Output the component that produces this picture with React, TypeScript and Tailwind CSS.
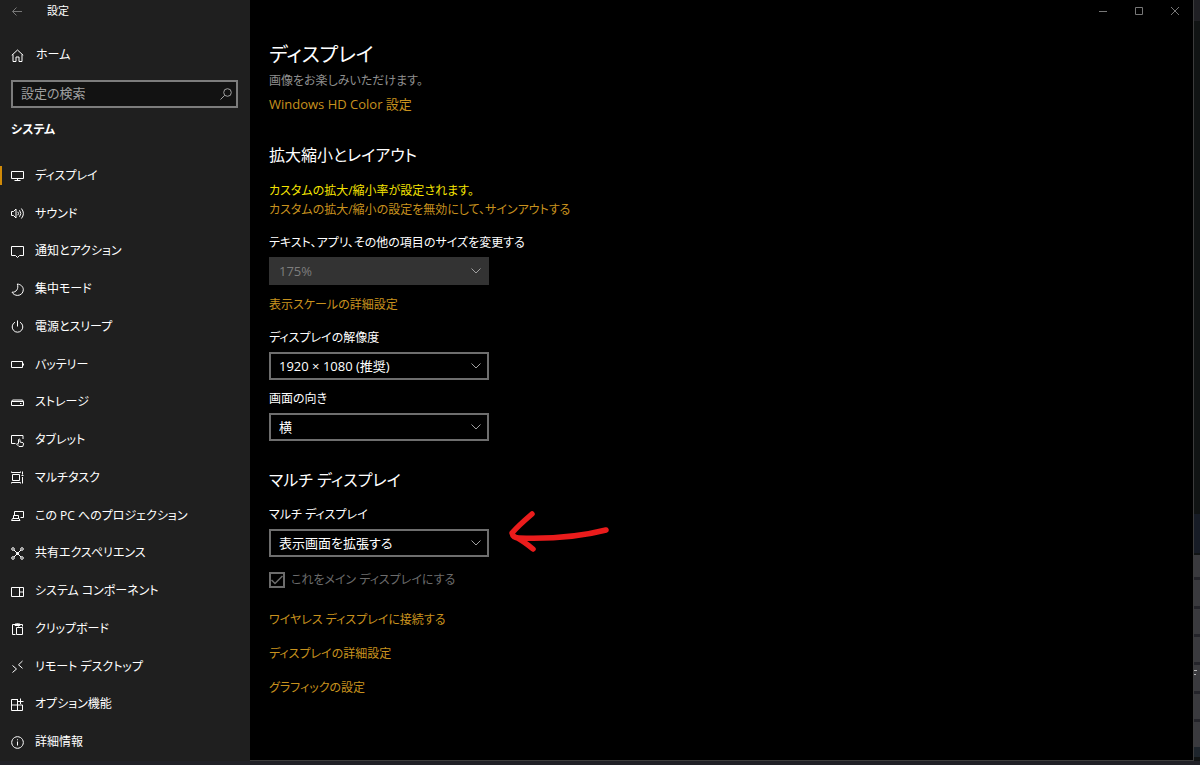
import { ReactNode } from "react";

const ICONS: Record<string, ReactNode> = {
  display: <path d="M.5 2.500h12v7H.5zM3.500 11.500h6M6.500 9.500v2" />,
  sound: <path d="M.5 4.500h2l2.500-2.500v9l-2.500-2.500h-2zM6.800 4.800q1.500 1.700 0 3.400M8.500 3.200q2.700 3.300 0 6.600M10.400 1.500q4 5 0 10" />,
  notify: <path d="M.5 1.500h12v9H8.500l-2 2-2-2H.5z" />,
  focus: <path d="M6.300 1c3.600.4 6 2.700 6 5.700 0 3.200-2.500 5.700-5.600 5.700-2.500 0-4.600-1.200-5.700-3.200 4.300.4 7-3.800 5.300-8.200z" />,
  power: <path d="M6.500.5v6M4 2.200a5.300 5.300 0 1 0 5 0" />,
  battery: <path d="M.5 3.500h11v6H.5zM12.500 5.500v2" />,
  storage: <path d="M.5 5.500l1-1.500h10l1 1.500v4H.5zM.5 5.500h12M9 7.500h1.500" />,
  tablet: <path d="M4.500 9.500h-4v-8h11.500v3.500M7.500 9.500V5.500q.8-1 1.500 0V8l3 .7q.7.300.5 1.300l-.7 2.500H8L5.500 10q.8-1 2 0" />,
  multitask: <path d="M1.500 3.500h7v6h-7zM.5.500v1h9v-1M.5 12.500v-1h9v1M11.500.5v3M11.500 6v6.500M10.500 4.500h2" />,
  project: <path d="M3.500 6V2.500h9v6H9.500M2.500 6.500h5v3h-5zM.5 11.500h8.500l-1-2H1.500z" />,
  shared: (
    <>
      <path d="M3 3l7 7M10 3l-7 7" />
      <circle cx="2" cy="2" r="1.300" />
      <circle cx="11" cy="2" r="1.300" />
      <circle cx="2" cy="11" r="1.300" />
      <circle cx="11" cy="11" r="1.300" />
      <circle cx="6.500" cy="6.500" r="1" fill="currentColor" />
    </>
  ),
  components: <path d="M.5 2.500h12v9H.5zM8.500 2.500v9M8.500 7h4" />,
  clipboard: <path d="M4.500 12.500h-3v-10h10v2M4 3.500V2h1.500q1-2 2 0H9v1.500zM5.500 5.500h6v7h-6zM7.500 5.500v-1" />,
  remote: <path d="M1.500 5.500l4 3.500-4 3.500M11.500 1L7.500 4.800l4 3.500" />,
  optional: <path d="M7 1.500H.5v11h11V7M.5 7h11M6.500 1.500v11M9.500.5v5.500M7 3.500h5.500" />,
  about: <path d="M6.500.7a5.800 5.800 0 1 0 .01 0zM6.500 5.500v4M6.500 3.300v1" />,
  home: <path d="M.8 6.300L6.500 1l5.700 5.300M2 5.500v7h3V8h3v4.500h3v-7" />,
};

const NAV = [
  { icon: "display", label: "ディスプレイ" },
  { icon: "sound", label: "サウンド" },
  { icon: "notify", label: "通知とアクション" },
  { icon: "focus", label: "集中モード" },
  { icon: "power", label: "電源とスリープ" },
  { icon: "battery", label: "バッテリー" },
  { icon: "storage", label: "ストレージ" },
  { icon: "tablet", label: "タブレット" },
  { icon: "multitask", label: "マルチタスク" },
  { icon: "project", label: "この PC へのプロジェクション" },
  { icon: "shared", label: "共有エクスペリエンス" },
  { icon: "components", label: "システム コンポーネント" },
  { icon: "clipboard", label: "クリップボード" },
  { icon: "remote", label: "リモート デスクトップ" },
  { icon: "optional", label: "オプション機能" },
  { icon: "about", label: "詳細情報" },
];

function Icon({ name }: { name: string }) {
  return (
    <svg viewBox="0 0 13 13" className="size-[13px] shrink-0 overflow-visible" fill="none" stroke="currentColor" aria-hidden="true">
      {ICONS[name]}
    </svg>
  );
}

interface SelectFieldProps {
  id: string;
  label: string;
  value: string;
  disabled?: boolean;
}

function SelectField({ id, label, value, disabled }: SelectFieldProps) {
  return (
    <div className="flex flex-col">
      <label htmlFor={id} className="mb-1 leading-5">{label}</label>
      <div className="relative w-[220px]">
        <select
          id={id}
          disabled={disabled}
          className="block h-7 w-full appearance-none border-2 border-[#6e6e6e] bg-black pl-2 pr-8 text-[13px] leading-5 text-white opacity-100 disabled:border-[#333] disabled:bg-[#333] disabled:text-[#7d7d7d]"
        >
          <option>{value}</option>
        </select>
        <svg viewBox="0 0 10 6" className="pointer-events-none absolute right-2 top-[11px] h-[6px] w-[10px] text-[#a0a0a0]" fill="none" stroke="currentColor" aria-hidden="true">
          <path d="M.5.5L5 5 9.500.5" />
        </svg>
      </div>
    </div>
  );
}

function Link({ children }: { children: ReactNode }) {
  return (
    <a href="#" className="self-start leading-5 text-[#c8921e]">{children}</a>
  );
}

function Sidebar() {
  return (
    <aside className="flex w-[250px] shrink-0 flex-col bg-[#1f1f1f]">
      <div className="flex h-[23px] items-center gap-[25px] pl-[12px] text-[11px]">
        <button aria-label="戻る" className="text-[#777]">
          <svg viewBox="0 0 10 9" className="h-[9px] w-[10px]" fill="none" stroke="currentColor" aria-hidden="true">
            <path d="M10 4.500H.7M4.500.5l-4 4 4 4" />
          </svg>
        </button>
        <span>設定</span>
      </div>
      <a href="#" className="mt-5 flex h-6 items-center gap-3 pl-[11px]">
        <Icon name="home" />
        ホーム
      </a>
      <div className="ml-[11px] mr-3 mt-[13px] flex h-7 items-center border-2 border-[#7c7c7c] bg-[#121212] pr-1 text-[13px]">
        <input
          type="text"
          aria-label="設定の検索"
          placeholder="設定の検索"
          className="min-w-0 flex-1 bg-transparent pl-2 outline-none placeholder:text-[#a0a0a0]"
        />
        <svg viewBox="0 0 12 12" className="size-3 text-[#a0a0a0]" fill="none" stroke="currentColor" aria-hidden="true">
          <circle cx="7.500" cy="4.500" r="3.800" />
          <path d="M4.700 7.300L.5 11.500" />
        </svg>
      </div>
      <h2 className="ml-[11px] mt-3 font-bold leading-5">システム</h2>
      <nav className="mt-[17px] flex flex-1 flex-col">
        {NAV.map((item, i) => (
          <a key={item.icon} href="#" className="flex flex-1 items-center" aria-current={i === 0 ? "page" : undefined}>
            <span className={i === 0 ? "h-[19px] w-[2px] bg-[#d08a08]" : "w-[2px]"} />
            <span className="flex items-center gap-[11px] pl-[9px]">
              <Icon name={item.icon} />
              <span className="leading-5">{item.label}</span>
            </span>
          </a>
        ))}
      </nav>
    </aside>
  );
}

function WindowControls() {
  return (
    <div className="flex h-[22px] items-center justify-end gap-[26px] pr-[13px] text-[#777]">
      <button aria-label="最小化">
        <svg viewBox="0 0 10 10" className="size-[10px]" stroke="currentColor" aria-hidden="true"><path d="M1 5.500h8" /></svg>
      </button>
      <button aria-label="最大化">
        <svg viewBox="0 0 10 10" className="size-[10px]" fill="none" stroke="currentColor" aria-hidden="true"><path d="M1.500 1.500h7v7h-7z" /></svg>
      </button>
      <button aria-label="閉じる">
        <svg viewBox="0 0 10 10" className="size-[10px]" stroke="currentColor" aria-hidden="true"><path d="M1 1l8 8M9 1L1 9" /></svg>
      </button>
    </div>
  );
}

// Sliver of the window that sits behind this one
function BackgroundWindow() {
  return (
    <div className="flex w-[6px] shrink-0 flex-col bg-[#111414]" aria-hidden="true">
      <div className="h-[21px] bg-[#202024]" />
      <div className="flex-1" />
      <div className="h-[39px] bg-[#171c26]" />
      <div className="mt-[2px] flex flex-col gap-[3px] bg-[#24242a]">
        {[22, 26, 25, 25, 26, 25, 25].map((height, i) => (
          <div key={i} className="bg-[#3a3a3e]" style={{ height }}>
            {i === 4 && (
              <svg viewBox="0 0 6 26" className="h-[26px] w-[6px]" stroke="#b8b8b8">
                <path d="M0 5.500h3M0 9.500h2" />
              </svg>
            )}
          </div>
        ))}
      </div>
      <div className="mb-1 h-[10px] bg-[#1e252c]" />
    </div>
  );
}

export default function App() {
  return (
    <div className="flex min-h-screen flex-col bg-[#212127] pb-1 text-xs text-white [font-family:'Open_Sans','Noto_Sans_CJK_JP',sans-serif] [font-feature-settings:'palt']">
      <div className="flex flex-1">
        <Sidebar />
        <main className="flex flex-1 flex-col border-b border-r border-[#3c3c3c] bg-black">
          <WindowControls />
          <div className="flex flex-col pl-[19px]">
            <h1 className="mt-[17px] text-xl leading-8">ディスプレイ</h1>
            <p className="leading-5 text-[#8f8f8f]">画像をお楽しみいただけます。</p>
            <div className="mt-[3px] flex text-[13px]"><Link>Windows HD Color 設定</Link></div>

            <h2 className="mt-7 text-base leading-[26px]">拡大縮小とレイアウト</h2>
            <p className="mt-[14px] leading-[18px] text-[#f5e400]">カスタムの拡大/縮小率が設定されます。</p>
            <Link>カスタムの拡大/縮小の設定を無効にして、サインアウトする</Link>

            <div className="mt-[13px] flex flex-col">
              <SelectField id="scale" label="テキスト、アプリ、その他の項目のサイズを変更する" value="175%" disabled />
              <div className="mb-[13px] mt-[10px] flex"><Link>表示スケールの詳細設定</Link></div>
              <div className="flex flex-col gap-[9px]">
                <SelectField id="resolution" label="ディスプレイの解像度" value="1920 × 1080 (推奨)" />
                <SelectField id="orientation" label="画面の向き" value="横" />
              </div>
            </div>

            <h2 className="mb-3 mt-[26px] text-base leading-[26px]">マルチ ディスプレイ</h2>
            <div className="flex items-end gap-5">
              <SelectField id="multi" label="マルチ ディスプレイ" value="表示画面を拡張する" />
              <svg viewBox="0 0 100 42" className="mb-1 h-[42px] w-[100px]" fill="none" stroke="#ea1c1c" strokeWidth="5.500" strokeLinecap="round" strokeLinejoin="round" aria-hidden="true">
                <path d="M23 3C16 9 9 15 3 22q1 5 7 5c30 1 60-1 87-8M6 26c7 3 12 7 18 12" />
              </svg>
            </div>

            <label className="mt-[13px] flex items-center gap-[6px] self-start leading-5 text-[#6c6c6c]">
              <span className="relative flex">
                <input type="checkbox" defaultChecked disabled className="size-4 appearance-none border-2 border-[#6c6c6c]" />
                <svg viewBox="0 0 16 16" className="absolute inset-0" fill="none" stroke="currentColor" strokeWidth="1.500" aria-hidden="true">
                  <path d="M2.500 8l3.500 3.500 7.500-7.500" />
                </svg>
              </span>
              これをメイン ディスプレイにする
            </label>

            <div className="mt-5 flex flex-col gap-[14px]">
              <Link>ワイヤレス ディスプレイに接続する</Link>
              <Link>ディスプレイの詳細設定</Link>
              <Link>グラフィックの設定</Link>
            </div>
          </div>
        </main>
        <BackgroundWindow />
      </div>
    </div>
  );
}
